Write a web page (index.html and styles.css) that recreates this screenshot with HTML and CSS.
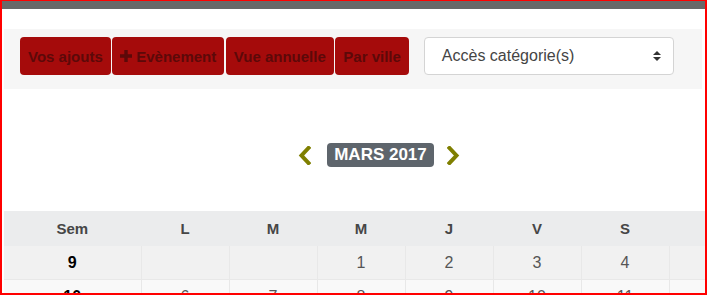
FILE: index.html
```html
<!DOCTYPE html>
<html lang="fr">
<head>
<meta charset="utf-8">
<title>Calendrier</title>
<link rel="stylesheet" href="styles.css">
</head>
<body>
<div class="topbar"></div>
<div class="page">
  <div class="toolbar">
    <div class="btns">
      <a class="btn">Vos ajouts</a>
      <a class="btn"><svg class="plus" width="12" height="12" viewBox="0 0 12 12"><path d="M4.3 0h3.4v4.3H12v3.4H7.7V12H4.3V7.7H0V4.3h4.3z" fill="currentColor"/></svg> Evènement</a>
      <a class="btn">Vue annuelle</a>
      <a class="btn">Par ville</a>
    </div>
    <div class="select">
      <span>Accès catégorie(s)</span>
      <svg class="updown" width="8" height="10" viewBox="0 0 8 10"><path d="M4 0L8 4H0z M4 10L0 6H8z" fill="#333"/></svg>
    </div>
  </div>
  <div class="monthnav">
    <svg class="chev" width="13" height="19" viewBox="0 0 13 19"><path d="M10.5 2L3.5 9.5L10.5 17" fill="none" stroke="#7f7f00" stroke-width="4" stroke-linecap="square"/></svg>
    <span class="badge">MARS 2017</span>
    <svg class="chev right" width="13" height="19" viewBox="0 0 13 19"><path d="M2.5 2L9.5 9.5L2.5 17" fill="none" stroke="#7f7f00" stroke-width="4" stroke-linecap="square"/></svg>
  </div>
  <table class="cal">
    <colgroup>
      <col class="c-wk"><col class="c-day"><col class="c-day"><col class="c-day"><col class="c-day"><col class="c-day"><col class="c-day"><col class="c-day">
    </colgroup>
    <thead>
      <tr><th class="wk">Sem</th><th>L</th><th>M</th><th>M</th><th>J</th><th>V</th><th>S</th><th>D</th></tr>
    </thead>
    <tbody>
      <tr class="odd"><td class="wk">9</td><td></td><td></td><td>1</td><td>2</td><td>3</td><td>4</td><td>5</td></tr>
      <tr class="even"><td class="wk">10</td><td>6</td><td>7</td><td>8</td><td>9</td><td>10</td><td>11</td><td>12</td></tr>
    </tbody>
  </table>
</div>
</body>
</html>
```

FILE: styles.css
```css
html, body {
  margin: 0;
  padding: 0;
}
body {
  width: 707px;
  height: 295px;
  box-sizing: border-box;
  border: solid #ff0000;
  border-width: 1px 2px 2px 2px;
  overflow: hidden;
  background: #ffffff;
  font-family: "Liberation Sans", Arial, sans-serif;
}
.topbar {
  height: 8px;
  background: #686868;
}
.page {
  width: 753px;
  margin-left: 2px;
}
.toolbar {
  width: 698px;
  height: 60px;
  box-sizing: border-box;
  margin-top: 20px;
  background: #f6f6f6;
  padding: 8px 16px;
  display: flex;
  align-items: flex-start;
  gap: 15px;
}
.btns {
  display: flex;
  gap: 1.5px;
}
.btn {
  display: flex;
  align-items: center;
  gap: 4px;
  height: 38px;
  box-sizing: border-box;
  padding: 0 8px;
  background: #a50b0b;
  color: #5c0909;
  font-weight: bold;
  font-size: 15px;
  border-radius: 4px;
  text-decoration: none;
  white-space: nowrap;
}
.plus {
  display: block;
}
.select {
  width: 250px;
  height: 38px;
  box-sizing: border-box;
  border: 1px solid #d4d4d4;
  border-radius: 4px;
  background: #ffffff;
  display: flex;
  align-items: center;
  justify-content: space-between;
  padding: 0 12px 0 17px;
  font-size: 16px;
  color: #444444;
}
.updown {
  display: block;
}
.monthnav {
  margin-top: 54px;
  height: 24px;
  display: flex;
  justify-content: center;
  align-items: center;
  padding-right: 3px;
}
.chev {
  display: block;
}
.chev:first-child {
  margin-right: 16px;
}
.chev.right {
  margin-left: 13px;
}
.badge {
  display: block;
  height: 24px;
  line-height: 24px;
  padding: 0 7px;
  background: #5e656c;
  color: #ffffff;
  font-weight: bold;
  font-size: 17px;
  border-radius: 4px;
}
.cal {
  margin-top: 44px;
  width: 753px;
  border-collapse: collapse;
  table-layout: fixed;
}
.c-wk {
  width: 137px;
}
.c-day {
  width: 88px;
}
.cal th, .cal td {
  text-align: center;
  padding: 0;
  border: 1px solid #e8e8e8;
}
.cal thead th {
  height: 33px;
  background: #ebeced;
  color: #464646;
  font-size: 15px;
  font-weight: bold;
  border-color: #ebeced;
}
.cal tbody td {
  height: 33px;
  font-size: 16px;
  color: #555555;
}
.cal tbody td.wk {
  color: #000000;
  font-weight: bold;
}
.cal tr.odd td {
  background: #f1f1f1;
}
.cal tr.even td {
  background: #f9f9f9;
}
.cal tr td:first-child, .cal tr th:first-child {
  border-left: none;
}
```
